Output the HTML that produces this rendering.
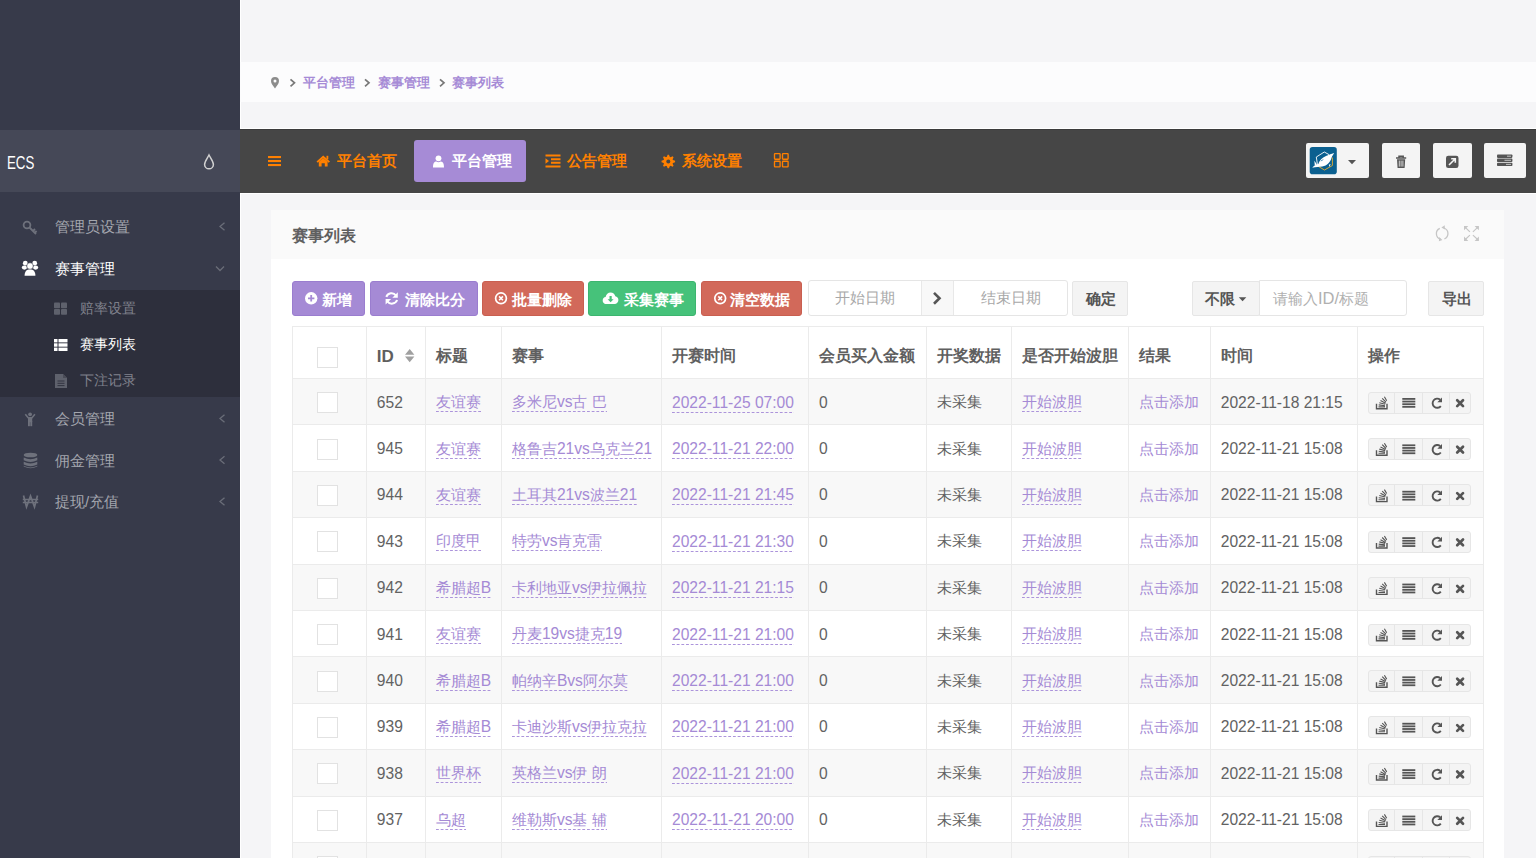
<!DOCTYPE html>
<html><head><meta charset="utf-8"><title>赛事列表</title>
<style>
*{box-sizing:border-box;margin:0;padding:0}
html,body{width:1536px;height:858px;overflow:hidden}
body{position:relative;background:#f5f5f7;font-family:"Liberation Sans",sans-serif;color:#555}
.abs{position:absolute}
svg{display:block;position:absolute}
/* sidebar */
#side{position:absolute;left:0;top:0;width:240px;height:858px;background:#373a4a}
#logo{position:absolute;left:0;top:130px;width:240px;height:62px;background:#454857}
#logo .t{position:absolute;left:7px;top:22px;font-size:17.5px;line-height:22px;color:#fff;transform:scaleX(0.76);transform-origin:0 0}
.mi{position:absolute;left:0;width:240px;height:42px;line-height:42px;font-size:15px;color:#a4a6ae}
.mi .tx{position:absolute;left:55px;top:0}
.mi.act{color:#fff}
#sub{position:absolute;left:0;top:290px;width:240px;height:107px;background:#2d2f3c}
.si{position:absolute;left:0;width:240px;height:36px;line-height:36px;font-size:14px;color:#80828d}
.si .tx{position:absolute;left:80px;top:0}
.si.act{color:#fff}
/* main top */
#bcbar{position:absolute;left:240px;top:62px;width:1296px;height:40px;background:#fcfcfd}
.bc{position:absolute;top:1px;line-height:40px;font-size:13px;font-weight:bold;color:#a68bd6}
#vline{position:absolute;left:240px;top:0;width:1px;height:858px;background:#fff}
#hl1{position:absolute;left:240px;top:128px;width:1296px;height:1px;background:#fff}
#nav{position:absolute;left:240px;top:129px;width:1296px;height:64px;background:#464646;border-top:1.5px solid #3b3b3b}
#hl2{position:absolute;left:240px;top:193px;width:1296px;height:1px;background:#fff}
.ni{position:absolute;top:0;line-height:62px;font-size:14.7px;font-weight:bold;color:#ff8000}
#nact{position:absolute;left:174px;top:10px;width:112px;height:42px;background:#a68bd6;border-radius:3px}
.tbtn{position:absolute;top:13px;height:35px;background:#f4f4f4;border-radius:2px}
/* panel */
#panel{position:absolute;left:271px;top:210px;width:1233px;height:700px;background:#fff}
#phead{position:absolute;left:0;top:0;width:1233px;height:49px;background:#fafafa}
#phead .t{position:absolute;left:21px;top:1px;line-height:50px;font-size:16px;font-weight:bold;color:#5f5f5f}
.btn{position:absolute;top:71px;height:35px;border-radius:3px;color:#fff;font-weight:bold;font-size:15px;line-height:35px}
.btn .tx{position:absolute;top:0}
.pur{background:#a58ad5;border:1px solid #9a7dcf}
.red{background:#d2695a;border:1px solid #c95f50}
.grn{background:#46c27a;border:1px solid #3db56f}
.inp{position:absolute;top:70px;height:36px;background:#fff;border:1px solid #e5e5e5;border-radius:3px;font-size:15px;color:#a9a9a9;line-height:34px}
.gbtn{position:absolute;top:71px;height:35px;background:#f4f4f4;border:1px solid #e6e6e6;border-radius:2px;font-size:15px;font-weight:bold;color:#555;line-height:33px}
/* table */
#tbl{position:absolute;left:20.5px;top:116px;border-collapse:collapse;table-layout:fixed;width:1192px}
#tbl td,#tbl th{border:1px solid #ebebeb;padding:0 0 0 10px;text-align:left;white-space:nowrap;overflow:hidden;font-size:15px;color:#626262;font-weight:normal}
#tbl th{height:52px;font-weight:bold;font-size:16px;color:#5f5f5f;padding-top:8px}
#tbl td{height:46.4px;padding-top:2px}
#tbl tr.odd td{background:#f8f8f8}
#tbl tr.even td{background:#fff}
#tbl a{color:#a58ad5;text-decoration:none;padding-bottom:2px;background:linear-gradient(90deg,#ac94db 50%,transparent 50%) 0 100%/4.7px 1px repeat-x}
#tbl a.plain{background:none}
.n{font-size:15.6px}
#tbl th .n{font-size:17px}
#tbl .c0{padding:0 3px 0 0;text-align:center}
#tbl th.c0 .cb{position:relative;top:4.5px}
#tbl td.c0{padding-top:2px}
.cb{display:inline-block;width:21px;height:21px;border:1px solid #e2e2e2;background:#fff;vertical-align:middle}
.ops{display:inline-block;width:103px;height:22px;border:1px solid #e6e6e6;border-radius:3px;background:#f4f4f4;vertical-align:middle;position:relative;margin-left:0}
.ops b{position:absolute;top:0;height:20px;border-left:1px solid #e6e6e6}
.ops .o1{display:none}.ops .o2{left:25.5px}.ops .o3{left:53px}.ops .o4{left:80.5px}

</style></head><body>
<div id="side">
  <div id="logo"><div class="t">ECS</div></div>
  <div class="mi" style="top:205.5px"><span class="tx">管理员设置</span></div>
  <div class="mi act" style="top:247.5px"><span class="tx">赛事管理</span></div>
  <div id="sub"></div>
  <div class="si" style="top:290px"><span class="tx">赔率设置</span></div>
  <div class="si act" style="top:326px"><span class="tx">赛事列表</span></div>
  <div class="si" style="top:362px"><span class="tx">下注记录</span></div>
  <div class="mi" style="top:397.5px"><span class="tx">会员管理</span></div>
  <div class="mi" style="top:439.5px"><span class="tx">佣金管理</span></div>
  <div class="mi" style="top:481px"><span class="tx">提现/充值</span></div>
</div>
<div id="vline"></div>
<div id="bcbar">
  <span class="bc" style="left:63px">平台管理</span>
  <span class="bc" style="left:138px">赛事管理</span>
  <span class="bc" style="left:212px">赛事列表</span>
</div>
<div id="hl1"></div>
<div id="nav">
  <span class="ni" style="left:97px">平台首页</span>
  <div id="nact"></div>
  <span class="ni" style="left:212px;color:#fff">平台管理</span>
  <span class="ni" style="left:327px">公告管理</span>
  <span class="ni" style="left:442px">系统设置</span>
  <div class="tbtn" style="left:1066px;width:63px"></div>
  <div class="tbtn" style="left:1142px;width:38px"></div>
  <div class="tbtn" style="left:1193px;width:39px"></div>
  <div class="tbtn" style="left:1244px;width:42px"></div>
</div>
<div id="hl2"></div>
<div id="panel">
  <div id="phead"><span class="t">赛事列表</span></div>
  <div class="btn pur" style="left:21px;width:73px"><span class="tx" style="left:29px">新增</span></div>
  <div class="btn pur" style="left:99px;width:108px"><span class="tx" style="left:34px">清除比分</span></div>
  <div class="btn red" style="left:211px;width:102px"><span class="tx" style="left:29px">批量删除</span></div>
  <div class="btn grn" style="left:317px;width:108px"><span class="tx" style="left:35px">采集赛事</span></div>
  <div class="btn red" style="left:430px;width:101px"><span class="tx" style="left:28px">清空数据</span></div>
  <div class="inp" style="left:537px;width:260px"></div>
  <div class="abs" style="left:650px;top:71px;width:33px;height:34px;background:#f8f8f8;border-left:1px solid #e8e8e8;border-right:1px solid #e8e8e8"></div>
  <span class="abs" style="left:564px;top:70px;line-height:36px;font-size:15px;color:#a8a8a8">开始日期</span>
  <span class="abs" style="left:710px;top:70px;line-height:36px;font-size:15px;color:#a8a8a8">结束日期</span>
  <div class="gbtn" style="left:801px;width:56px"><span class="abs" style="left:13px;top:0">确定</span></div>
  <div class="gbtn" style="left:921px;width:68px"><span class="abs" style="left:12px;top:0">不限</span></div>
  <div class="inp" style="left:988px;width:148px;border-radius:0 3px 3px 0"><span class="abs" style="left:13px;top:0;color:#b0b0b0">请输入<span style="font-size:16.5px">ID/</span>标题</span></div>
  <div class="gbtn" style="left:1157px;width:56px"><span class="abs" style="left:13px;top:0">导出</span></div>
  <table id="tbl">
    <colgroup><col style="width:74.3px"><col style="width:59px"><col style="width:76.1px"><col style="width:160.1px"><col style="width:146.9px"><col style="width:117.8px"><col style="width:85.2px"><col style="width:117.1px"><col style="width:81.8px"><col style="width:147.2px"><col style="width:126px"></colgroup>
    <tr><th class="c0"><i class="cb"></i></th><th><span class="n">ID</span></th><th>标题</th><th>赛事</th><th>开赛时间</th><th>会员买入金额</th><th>开奖数据</th><th>是否开始波胆</th><th>结果</th><th>时间</th><th>操作</th></tr>
<tr class="odd"><td class="c0"><i class="cb"></i></td><td class="c1"><span class="n">652</span></td><td class="c2"><a>友谊赛</a></td><td class="c3"><a>多米尼<span class="n">vs</span>古 巴</a></td><td class="c4"><a><span class="n">2022-11-25 07:00</span></a></td><td class="c5"><span class="n">0</span></td><td class="c6">未采集</td><td class="c7"><a>开始波胆</a></td><td class="c8"><a class="plain">点击添加</a></td><td class="c9"><span class="n">2022-11-18 21:15</span></td><td class="c10"><div class="ops"><b class="o1"></b><b class="o2"></b><b class="o3"></b><b class="o4"></b></div></td></tr>
<tr class="even"><td class="c0"><i class="cb"></i></td><td class="c1"><span class="n">945</span></td><td class="c2"><a>友谊赛</a></td><td class="c3"><a>格鲁吉<span class="n">21vs</span>乌克兰<span class="n">21</span></a></td><td class="c4"><a><span class="n">2022-11-21 22:00</span></a></td><td class="c5"><span class="n">0</span></td><td class="c6">未采集</td><td class="c7"><a>开始波胆</a></td><td class="c8"><a class="plain">点击添加</a></td><td class="c9"><span class="n">2022-11-21 15:08</span></td><td class="c10"><div class="ops"><b class="o1"></b><b class="o2"></b><b class="o3"></b><b class="o4"></b></div></td></tr>
<tr class="odd"><td class="c0"><i class="cb"></i></td><td class="c1"><span class="n">944</span></td><td class="c2"><a>友谊赛</a></td><td class="c3"><a>土耳其<span class="n">21vs</span>波兰<span class="n">21</span></a></td><td class="c4"><a><span class="n">2022-11-21 21:45</span></a></td><td class="c5"><span class="n">0</span></td><td class="c6">未采集</td><td class="c7"><a>开始波胆</a></td><td class="c8"><a class="plain">点击添加</a></td><td class="c9"><span class="n">2022-11-21 15:08</span></td><td class="c10"><div class="ops"><b class="o1"></b><b class="o2"></b><b class="o3"></b><b class="o4"></b></div></td></tr>
<tr class="even"><td class="c0"><i class="cb"></i></td><td class="c1"><span class="n">943</span></td><td class="c2"><a>印度甲</a></td><td class="c3"><a>特劳<span class="n">vs</span>肯克雷</a></td><td class="c4"><a><span class="n">2022-11-21 21:30</span></a></td><td class="c5"><span class="n">0</span></td><td class="c6">未采集</td><td class="c7"><a>开始波胆</a></td><td class="c8"><a class="plain">点击添加</a></td><td class="c9"><span class="n">2022-11-21 15:08</span></td><td class="c10"><div class="ops"><b class="o1"></b><b class="o2"></b><b class="o3"></b><b class="o4"></b></div></td></tr>
<tr class="odd"><td class="c0"><i class="cb"></i></td><td class="c1"><span class="n">942</span></td><td class="c2"><a>希腊超<span class="n">B</span></a></td><td class="c3"><a>卡利地亚<span class="n">vs</span>伊拉佩拉</a></td><td class="c4"><a><span class="n">2022-11-21 21:15</span></a></td><td class="c5"><span class="n">0</span></td><td class="c6">未采集</td><td class="c7"><a>开始波胆</a></td><td class="c8"><a class="plain">点击添加</a></td><td class="c9"><span class="n">2022-11-21 15:08</span></td><td class="c10"><div class="ops"><b class="o1"></b><b class="o2"></b><b class="o3"></b><b class="o4"></b></div></td></tr>
<tr class="even"><td class="c0"><i class="cb"></i></td><td class="c1"><span class="n">941</span></td><td class="c2"><a>友谊赛</a></td><td class="c3"><a>丹麦<span class="n">19vs</span>捷克<span class="n">19</span></a></td><td class="c4"><a><span class="n">2022-11-21 21:00</span></a></td><td class="c5"><span class="n">0</span></td><td class="c6">未采集</td><td class="c7"><a>开始波胆</a></td><td class="c8"><a class="plain">点击添加</a></td><td class="c9"><span class="n">2022-11-21 15:08</span></td><td class="c10"><div class="ops"><b class="o1"></b><b class="o2"></b><b class="o3"></b><b class="o4"></b></div></td></tr>
<tr class="odd"><td class="c0"><i class="cb"></i></td><td class="c1"><span class="n">940</span></td><td class="c2"><a>希腊超<span class="n">B</span></a></td><td class="c3"><a>帕纳辛<span class="n">Bvs</span>阿尔莫</a></td><td class="c4"><a><span class="n">2022-11-21 21:00</span></a></td><td class="c5"><span class="n">0</span></td><td class="c6">未采集</td><td class="c7"><a>开始波胆</a></td><td class="c8"><a class="plain">点击添加</a></td><td class="c9"><span class="n">2022-11-21 15:08</span></td><td class="c10"><div class="ops"><b class="o1"></b><b class="o2"></b><b class="o3"></b><b class="o4"></b></div></td></tr>
<tr class="even"><td class="c0"><i class="cb"></i></td><td class="c1"><span class="n">939</span></td><td class="c2"><a>希腊超<span class="n">B</span></a></td><td class="c3"><a>卡迪沙斯<span class="n">vs</span>伊拉克拉</a></td><td class="c4"><a><span class="n">2022-11-21 21:00</span></a></td><td class="c5"><span class="n">0</span></td><td class="c6">未采集</td><td class="c7"><a>开始波胆</a></td><td class="c8"><a class="plain">点击添加</a></td><td class="c9"><span class="n">2022-11-21 15:08</span></td><td class="c10"><div class="ops"><b class="o1"></b><b class="o2"></b><b class="o3"></b><b class="o4"></b></div></td></tr>
<tr class="odd"><td class="c0"><i class="cb"></i></td><td class="c1"><span class="n">938</span></td><td class="c2"><a>世界杯</a></td><td class="c3"><a>英格兰<span class="n">vs</span>伊 朗</a></td><td class="c4"><a><span class="n">2022-11-21 21:00</span></a></td><td class="c5"><span class="n">0</span></td><td class="c6">未采集</td><td class="c7"><a>开始波胆</a></td><td class="c8"><a class="plain">点击添加</a></td><td class="c9"><span class="n">2022-11-21 15:08</span></td><td class="c10"><div class="ops"><b class="o1"></b><b class="o2"></b><b class="o3"></b><b class="o4"></b></div></td></tr>
<tr class="even"><td class="c0"><i class="cb"></i></td><td class="c1"><span class="n">937</span></td><td class="c2"><a>乌超</a></td><td class="c3"><a>维勒斯<span class="n">vs</span>基 辅</a></td><td class="c4"><a><span class="n">2022-11-21 20:00</span></a></td><td class="c5"><span class="n">0</span></td><td class="c6">未采集</td><td class="c7"><a>开始波胆</a></td><td class="c8"><a class="plain">点击添加</a></td><td class="c9"><span class="n">2022-11-21 15:08</span></td><td class="c10"><div class="ops"><b class="o1"></b><b class="o2"></b><b class="o3"></b><b class="o4"></b></div></td></tr>
<tr class="odd"><td class="c0"><i class="cb"></i></td><td class="c1"><span class="n">936</span></td><td class="c2"><a>友谊赛</a></td><td class="c3"><a></a></td><td class="c4"><a></a></td><td class="c5"><span class="n">0</span></td><td class="c6">未采集</td><td class="c7"><a>开始波胆</a></td><td class="c8"><a class="plain">点击添加</a></td><td class="c9"></td><td class="c10"><div class="ops"><b class="o1"></b><b class="o2"></b><b class="o3"></b><b class="o4"></b></div></td></tr>
  </table>
</div>
<svg width="1536" height="858" viewBox="0 0 1536 858" style="left:0;top:0">
<path d="M275,88.5 C273.2,85.8 271,83.6 271,81 A4,4 0 0 1 279,81 C279,83.6 276.8,85.8 275,88.5Z" fill="#8c8c8c"/><circle cx="275" cy="81" r="1.5" fill="#fcfcfd"/>
<polyline points="290.5,79.3 294.5,82.8 290.5,86.3" fill="none" stroke="#787878" stroke-width="1.7"/>
<polyline points="365,79.3 369,82.8 365,86.3" fill="none" stroke="#787878" stroke-width="1.7"/>
<polyline points="440,79.3 444,82.8 440,86.3" fill="none" stroke="#787878" stroke-width="1.7"/>
<path d="M209,155 C207.2,158.5 204.6,161.5 204.6,164.4 A4.4,4.4 0 0 0 213.4,164.4 C213.4,161.5 210.8,158.5 209,155Z" fill="none" stroke="#d2d2d2" stroke-width="1.5"/>
<circle cx="27" cy="225" r="3.4" fill="none" stroke="#6e717c" stroke-width="1.8"/><path d="M29.5,227.5 L36,234 M33,231 L35,229 M34.8,232.8 L36.6,231" stroke="#6e717c" stroke-width="1.8" fill="none"/>
<circle cx="25.3" cy="263.2" r="2.4" fill="#fff"/><circle cx="34.7" cy="263.2" r="2.4" fill="#fff"/><ellipse cx="24.4" cy="267.6" rx="2.6" ry="2.1" fill="#fff"/><ellipse cx="35.6" cy="267.6" rx="2.6" ry="2.1" fill="#fff"/><circle cx="30" cy="266" r="3.3" fill="#fff" stroke="#373a4a" stroke-width="0.6"/><path d="M24.6,275.8 C24.6,271.3 26.4,269.4 30,269.4 C33.6,269.4 35.4,271.3 35.4,275.8 Z" fill="#fff"/>
<rect x="54" y="302.5" width="6" height="5.8" rx="0.8" fill="#5e616c"/>
<rect x="61" y="302.5" width="6" height="5.8" rx="0.8" fill="#5e616c"/>
<rect x="54" y="309" width="6" height="5.8" rx="0.8" fill="#5e616c"/>
<rect x="61" y="309" width="6" height="5.8" rx="0.8" fill="#5e616c"/>
<rect x="54" y="339" width="3.5" height="3.4" fill="#fff"/><rect x="58.5" y="339" width="9" height="3.4" fill="#fff"/>
<rect x="54" y="343.3" width="3.5" height="3.4" fill="#fff"/><rect x="58.5" y="343.3" width="9" height="3.4" fill="#fff"/>
<rect x="54" y="347.6" width="3.5" height="3.4" fill="#fff"/><rect x="58.5" y="347.6" width="9" height="3.4" fill="#fff"/>
<path d="M55,374 L63,374 L67,378 L67,388 L55,388Z" fill="#5e616c"/><path d="M63,374 L63,378 L67,378" fill="#4a4c57"/><path d="M57.5,381 H64.5 M57.5,383.3 H64.5 M57.5,385.6 H64.5" stroke="#2d2f3c" stroke-width="0.9"/>
<circle cx="30.1" cy="414.3" r="1.9" fill="#6e717c"/><polyline points="25.3,414.3 28.2,417.8 32,417.8 34.9,414.3" fill="none" stroke="#6e717c" stroke-width="1.6"/><rect x="28" y="417.2" width="4.2" height="5" fill="#6e717c"/><rect x="28" y="421" width="1.9" height="5.2" fill="#6e717c"/><rect x="30.3" y="421" width="1.9" height="5.2" fill="#6e717c"/>
<ellipse cx="30.5" cy="455" rx="6.8" ry="2.3" fill="#6e717c"/><path d="M23.7,457.5 Q30.5,461 37.3,457.5 V460.2 Q30.5,463.7 23.7,460.2Z" fill="#6e717c"/><path d="M23.7,461.7 Q30.5,465.2 37.3,461.7 V464.4 Q30.5,467.9 23.7,464.4Z" fill="#6e717c"/><path d="M23.7,465.8 Q30.5,469.3 37.3,465.8 V466.5 Q30.5,470 23.7,466.5Z" fill="#6e717c"/>
<path d="M23.5,495.5 L26.5,507 L30.5,496 L34.5,507 L37.5,495.5 M22.8,499.5 H38.2 M22.8,502.5 H38.2" fill="none" stroke="#6e717c" stroke-width="1.7"/>
<polyline points="224.5,222.7 220,226.5 224.5,230.3" fill="none" stroke="#6a6d78" stroke-width="1.3"/>
<polyline points="224.5,414.7 220,418.5 224.5,422.3" fill="none" stroke="#6a6d78" stroke-width="1.3"/>
<polyline points="224.5,456.2 220,460 224.5,463.8" fill="none" stroke="#6a6d78" stroke-width="1.3"/>
<polyline points="224.5,497.7 220,501.5 224.5,505.3" fill="none" stroke="#6a6d78" stroke-width="1.3"/>
<polyline points="216,266.5 220,270.5 224,266.5" fill="none" stroke="#6a6d78" stroke-width="1.3"/>
<rect x="268" y="156" width="13" height="2.1" fill="#ff8000"/>
<rect x="268" y="160" width="13" height="2.1" fill="#ff8000"/>
<rect x="268" y="164" width="13" height="2.1" fill="#ff8000"/>
<path d="M316.5,161.5 L323.2,155.5 L330,161.5 L328.7,162.8 L323.2,157.9 L317.8,162.8Z" fill="#ff8000"/><path d="M318.8,161.8 L323.2,158 L327.6,161.8 V166.5 H324.8 V163.3 H321.6 V166.5 H318.8Z" fill="#ff8000"/><rect x="326.5" y="155.8" width="1.8" height="3.5" fill="#ff8000"/>
<circle cx="438.5" cy="158.3" r="2.9" fill="#fff"/><path d="M433,167.5 C433,163 434.5,161.8 436.3,161.6 Q438.5,163 440.7,161.6 C442.5,161.8 444,163 444,167.5Z" fill="#fff"/>
<path d="M545.5,156 H560.5 V158 H545.5Z M551,159.7 H560.5 V161.7 H551Z M551,163.3 H560.5 V165.3 H551Z M545.5,167 H560.5 V169 H545.5Z" fill="#ff8000" transform="translate(0,-1.5)"/><path d="M545.5,158.3 L549,161 L545.5,163.7Z" fill="#ff8000"/>
<path d="M675.07,160.83 L675.07,162.17 L672.99,162.92 L672.62,163.81 L673.56,165.81 L672.61,166.76 L670.61,165.82 L669.72,166.19 L668.97,168.27 L667.63,168.27 L666.88,166.19 L665.99,165.82 L663.99,166.76 L663.04,165.81 L663.98,163.81 L663.61,162.92 L661.53,162.17 L661.53,160.83 L663.61,160.08 L663.98,159.19 L663.04,157.19 L663.99,156.24 L665.99,157.18 L666.88,156.81 L667.63,154.73 L668.97,154.73 L669.72,156.81 L670.61,157.18 L672.61,156.24 L673.56,157.19 L672.62,159.19 L672.99,160.08 Z" fill="#ff8000"/><circle cx="668.3" cy="161.5" r="2" fill="#464646"/>
<rect x="774.5" y="153.6" width="5.6" height="5.6" rx="0.6" fill="none" stroke="#ff8000" stroke-width="1.35"/>
<rect x="782.5" y="153.6" width="5.6" height="5.6" rx="0.6" fill="none" stroke="#ff8000" stroke-width="1.35"/>
<rect x="774.5" y="161.2" width="5.6" height="5.6" rx="0.6" fill="none" stroke="#ff8000" stroke-width="1.35"/>
<rect x="782.5" y="161.2" width="5.6" height="5.6" rx="0.6" fill="none" stroke="#ff8000" stroke-width="1.35"/>
<rect x="1309.7" y="147" width="27.1" height="27.2" rx="2.8" fill="#0b6090"/><path d="M1332.4,157.5 L1332.4,165.5 L1324.5,170 L1318,166.2" fill="none" stroke="#d4a83a" stroke-width="1"/><path d="M1317.6,165.5 L1316.3,157 L1324.3,152 L1329,154.6" fill="none" stroke="#fff" stroke-width="0.9"/><path d="M1312.3,167.8 C1314,165.6 1316,164.6 1318.3,164 C1319.5,160.5 1322,157.6 1326,156 C1329,154.8 1331.8,153.8 1334.2,153 C1333.2,154.7 1332,156.3 1331.4,158.3 C1330.3,162.3 1327.2,165.6 1322.3,166.6 C1319.3,167.2 1316,166.8 1312.3,167.8 Z" fill="#fff"/><path d="M1314.8,165.6 L1314.3,160.8 L1317,164.4 Z" fill="#fff"/><path d="M1320.6,161.4 C1321.4,159.8 1322.8,159 1323.8,159.6 C1322.8,160.3 1321.8,161.2 1320.6,161.4Z" fill="#0b6090"/><path d="M1328.8,164.8 L1329.6,167 L1330.6,164" fill="#fff"/>
<path d="M1348,160 H1356 L1352,164.2Z" fill="#555"/>
<path d="M1396,158 H1406.2 M1399,158 V156.3 H1403.2 V158" fill="none" stroke="#555" stroke-width="1.5"/><path d="M1397,159.2 H1405.2 L1404.6,168 H1397.6Z" fill="#555"/><path d="M1399.3,160.6 V166.6 M1401.1,160.6 V166.6 M1402.9,160.6 V166.6" stroke="#f4f4f4" stroke-width="0.8"/>
<rect x="1446" y="155.8" width="12.5" height="12.3" rx="2.3" fill="#555"/><path d="M1449,165 L1454.8,159.2 M1451.2,158.7 H1455.3 V162.8" fill="none" stroke="#f4f4f4" stroke-width="1.6"/>
<rect x="1497" y="154.5" width="15.4" height="3.4" rx="0.8" fill="#555"/>
<rect x="1497" y="158.6" width="15.4" height="3.4" rx="0.8" fill="#555"/>
<rect x="1497" y="162.7" width="15.4" height="3.4" rx="0.8" fill="#555"/>
<path d="M1507,156.2 H1511 M1504.5,160.3 H1511 M1506,164.4 H1511" stroke="#f4f4f4" stroke-width="0.7"/>
<path d="M1439.8,228.3 A5.9,5.9 0 0 0 1440.6,239.3" fill="none" stroke="#c6c6c6" stroke-width="1.3"/><path d="M1443.9,228.0 A5.9,5.9 0 0 1 1444.4,239.0" fill="none" stroke="#c6c6c6" stroke-width="1.3"/><path d="M1442.4,239.9 L1439.2,237.1 L1438.9,241.2Z" fill="#c6c6c6"/><path d="M1441.4,227.4 L1444.7,225.3 L1444.9,229.6Z" fill="#c6c6c6"/>
<path d="M1465,227.1 L1469.9,231.9 M1477.9,227.1 L1472.9,231.9 M1465,239.8 L1469.9,235.1 M1477.9,239.8 L1472.9,235.1" fill="none" stroke="#c6c6c6" stroke-width="1.2"/><path d="M1464,226 H1468.3 L1464,230.3Z M1478.9,226 H1474.6 L1478.9,230.3Z M1464,240.9 H1468.3 L1464,236.6Z M1478.9,240.9 H1474.6 L1478.9,236.6Z" fill="#c6c6c6"/>
<circle cx="311.2" cy="298.3" r="6.2" fill="#fff"/><path d="M308,298.3 H314.4 M311.2,295.1 V301.5" stroke="#a58ad5" stroke-width="1.8"/>
<path d="M396,295.5 A5.6,5.6 0 0 0 386.3,296.8 M387.4,301.4 A5.6,5.6 0 0 0 397.1,300" fill="none" stroke="#fff" stroke-width="2"/><path d="M397.8,292.2 V297.7 H392.3Z M385.6,304.6 V299.1 H391.1Z" fill="#fff"/>
<circle cx="501" cy="298.3" r="5.4" fill="none" stroke="#fff" stroke-width="1.7"/><path d="M499.1,296.4 L502.9,300.2 M502.9,296.4 L499.1,300.2" stroke="#fff" stroke-width="1.6"/>
<circle cx="720.2" cy="298.3" r="5.4" fill="none" stroke="#fff" stroke-width="1.7"/><path d="M718.3000000000001,296.4 L722.1,300.2 M722.1,296.4 L718.3000000000001,300.2" stroke="#fff" stroke-width="1.6"/>
<path d="M606.5,304 C603.5,304 602.7,302 602.7,300.5 C602.7,298.5 604,297.3 605.6,297.1 C606,294.3 608.2,292.5 610.5,292.5 C613,292.5 614.8,294.2 615.3,296.3 C617,296.5 618.4,298 618.4,300 C618.4,302.3 616.8,304 614.5,304Z" fill="#fff"/><path d="M609.5,296 H611.7 V299.2 H613.6 L610.6,302.3 L607.6,299.2 H609.5Z" fill="#46c27a"/>
<polyline points="934,292.9 939.5,298.3 934,303.7" fill="none" stroke="#555" stroke-width="2.6"/>
<path d="M1238.8,297.3 H1246.3 L1242.55,301.2Z" fill="#555"/>
<path d="M405,354.8 L409.7,349 L414.4,354.8Z M405,356.5 L409.7,362.3 L414.4,356.5Z" fill="#a0a0a0"/>
<path d="M1376.5,403.8 V408.8 H1387 V403.8" fill="none" stroke="#555" stroke-width="1.4"/><path d="M1378.5,406.90000000000003 H1385 M1378.7,404.90000000000003 L1385,405.7 M1379.3,402.7 L1385.2,404.2 M1380.5,400.5 L1385.6,403.2 M1382.2,398.3 L1386,402.1 M1384.4,396.8 L1386.7,400.7" stroke="#555" stroke-width="1.1"/>
<rect x="1402.3" y="398.00" width="13" height="1.8" fill="#555"/>
<rect x="1402.3" y="400.65" width="13" height="1.8" fill="#555"/>
<rect x="1402.3" y="403.30" width="13" height="1.8" fill="#555"/>
<rect x="1402.3" y="405.95" width="13" height="1.8" fill="#555"/>
<path d="M1440.2,399.7 A4.6,4.6 0 1 0 1440.8,406.1" fill="none" stroke="#555" stroke-width="1.9"/><path d="M1442,397.6 V402.3 H1437.3Z" fill="#555"/>
<path d="M1457.2,400.3 L1463,406.1 M1463,400.3 L1457.2,406.1" stroke="#555" stroke-width="2.7" stroke-linecap="round"/>
<path d="M1376.5,450.2 V455.2 H1387 V450.2" fill="none" stroke="#555" stroke-width="1.4"/><path d="M1378.5,453.3 H1385 M1378.7,451.3 L1385,452.09999999999997 M1379.3,449.09999999999997 L1385.2,450.59999999999997 M1380.5,446.9 L1385.6,449.59999999999997 M1382.2,444.7 L1386,448.5 M1384.4,443.2 L1386.7,447.09999999999997" stroke="#555" stroke-width="1.1"/>
<rect x="1402.3" y="444.40" width="13" height="1.8" fill="#555"/>
<rect x="1402.3" y="447.05" width="13" height="1.8" fill="#555"/>
<rect x="1402.3" y="449.70" width="13" height="1.8" fill="#555"/>
<rect x="1402.3" y="452.35" width="13" height="1.8" fill="#555"/>
<path d="M1440.2,446.09999999999997 A4.6,4.6 0 1 0 1440.8,452.5" fill="none" stroke="#555" stroke-width="1.9"/><path d="M1442,444.0 V448.7 H1437.3Z" fill="#555"/>
<path d="M1457.2,446.7 L1463,452.5 M1463,446.7 L1457.2,452.5" stroke="#555" stroke-width="2.7" stroke-linecap="round"/>
<path d="M1376.5,496.6 V501.6 H1387 V496.6" fill="none" stroke="#555" stroke-width="1.4"/><path d="M1378.5,499.70000000000005 H1385 M1378.7,497.70000000000005 L1385,498.5 M1379.3,495.5 L1385.2,497.0 M1380.5,493.3 L1385.6,496.0 M1382.2,491.1 L1386,494.90000000000003 M1384.4,489.6 L1386.7,493.5" stroke="#555" stroke-width="1.1"/>
<rect x="1402.3" y="490.80" width="13" height="1.8" fill="#555"/>
<rect x="1402.3" y="493.45" width="13" height="1.8" fill="#555"/>
<rect x="1402.3" y="496.10" width="13" height="1.8" fill="#555"/>
<rect x="1402.3" y="498.75" width="13" height="1.8" fill="#555"/>
<path d="M1440.2,492.5 A4.6,4.6 0 1 0 1440.8,498.90000000000003" fill="none" stroke="#555" stroke-width="1.9"/><path d="M1442,490.40000000000003 V495.1 H1437.3Z" fill="#555"/>
<path d="M1457.2,493.1 L1463,498.90000000000003 M1463,493.1 L1457.2,498.90000000000003" stroke="#555" stroke-width="2.7" stroke-linecap="round"/>
<path d="M1376.5,543.0 V548.0 H1387 V543.0" fill="none" stroke="#555" stroke-width="1.4"/><path d="M1378.5,546.1 H1385 M1378.7,544.1 L1385,544.9 M1379.3,541.9 L1385.2,543.4 M1380.5,539.7 L1385.6,542.4 M1382.2,537.5 L1386,541.3 M1384.4,536.0 L1386.7,539.9" stroke="#555" stroke-width="1.1"/>
<rect x="1402.3" y="537.20" width="13" height="1.8" fill="#555"/>
<rect x="1402.3" y="539.85" width="13" height="1.8" fill="#555"/>
<rect x="1402.3" y="542.50" width="13" height="1.8" fill="#555"/>
<rect x="1402.3" y="545.15" width="13" height="1.8" fill="#555"/>
<path d="M1440.2,538.9 A4.6,4.6 0 1 0 1440.8,545.3" fill="none" stroke="#555" stroke-width="1.9"/><path d="M1442,536.8 V541.5 H1437.3Z" fill="#555"/>
<path d="M1457.2,539.5 L1463,545.3 M1463,539.5 L1457.2,545.3" stroke="#555" stroke-width="2.7" stroke-linecap="round"/>
<path d="M1376.5,589.4 V594.4 H1387 V589.4" fill="none" stroke="#555" stroke-width="1.4"/><path d="M1378.5,592.5 H1385 M1378.7,590.5 L1385,591.3 M1379.3,588.3 L1385.2,589.8 M1380.5,586.1 L1385.6,588.8 M1382.2,583.9 L1386,587.6999999999999 M1384.4,582.4 L1386.7,586.3" stroke="#555" stroke-width="1.1"/>
<rect x="1402.3" y="583.60" width="13" height="1.8" fill="#555"/>
<rect x="1402.3" y="586.25" width="13" height="1.8" fill="#555"/>
<rect x="1402.3" y="588.90" width="13" height="1.8" fill="#555"/>
<rect x="1402.3" y="591.55" width="13" height="1.8" fill="#555"/>
<path d="M1440.2,585.3 A4.6,4.6 0 1 0 1440.8,591.6999999999999" fill="none" stroke="#555" stroke-width="1.9"/><path d="M1442,583.1999999999999 V587.9 H1437.3Z" fill="#555"/>
<path d="M1457.2,585.9 L1463,591.6999999999999 M1463,585.9 L1457.2,591.6999999999999" stroke="#555" stroke-width="2.7" stroke-linecap="round"/>
<path d="M1376.5,635.8 V640.8 H1387 V635.8" fill="none" stroke="#555" stroke-width="1.4"/><path d="M1378.5,638.9 H1385 M1378.7,636.9 L1385,637.6999999999999 M1379.3,634.6999999999999 L1385.2,636.1999999999999 M1380.5,632.5 L1385.6,635.1999999999999 M1382.2,630.3 L1386,634.0999999999999 M1384.4,628.8 L1386.7,632.6999999999999" stroke="#555" stroke-width="1.1"/>
<rect x="1402.3" y="630.00" width="13" height="1.8" fill="#555"/>
<rect x="1402.3" y="632.65" width="13" height="1.8" fill="#555"/>
<rect x="1402.3" y="635.30" width="13" height="1.8" fill="#555"/>
<rect x="1402.3" y="637.95" width="13" height="1.8" fill="#555"/>
<path d="M1440.2,631.6999999999999 A4.6,4.6 0 1 0 1440.8,638.0999999999999" fill="none" stroke="#555" stroke-width="1.9"/><path d="M1442,629.5999999999999 V634.3 H1437.3Z" fill="#555"/>
<path d="M1457.2,632.3 L1463,638.0999999999999 M1463,632.3 L1457.2,638.0999999999999" stroke="#555" stroke-width="2.7" stroke-linecap="round"/>
<path d="M1376.5,682.2 V687.2 H1387 V682.2" fill="none" stroke="#555" stroke-width="1.4"/><path d="M1378.5,685.3000000000001 H1385 M1378.7,683.3000000000001 L1385,684.1 M1379.3,681.1 L1385.2,682.6 M1380.5,678.9000000000001 L1385.6,681.6 M1382.2,676.7 L1386,680.5 M1384.4,675.2 L1386.7,679.1" stroke="#555" stroke-width="1.1"/>
<rect x="1402.3" y="676.40" width="13" height="1.8" fill="#555"/>
<rect x="1402.3" y="679.05" width="13" height="1.8" fill="#555"/>
<rect x="1402.3" y="681.70" width="13" height="1.8" fill="#555"/>
<rect x="1402.3" y="684.35" width="13" height="1.8" fill="#555"/>
<path d="M1440.2,678.1 A4.6,4.6 0 1 0 1440.8,684.5" fill="none" stroke="#555" stroke-width="1.9"/><path d="M1442,676.0 V680.7 H1437.3Z" fill="#555"/>
<path d="M1457.2,678.7 L1463,684.5 M1463,678.7 L1457.2,684.5" stroke="#555" stroke-width="2.7" stroke-linecap="round"/>
<path d="M1376.5,728.6 V733.6 H1387 V728.6" fill="none" stroke="#555" stroke-width="1.4"/><path d="M1378.5,731.7 H1385 M1378.7,729.7 L1385,730.5 M1379.3,727.5 L1385.2,729.0 M1380.5,725.3000000000001 L1385.6,728.0 M1382.2,723.1 L1386,726.9 M1384.4,721.6 L1386.7,725.5" stroke="#555" stroke-width="1.1"/>
<rect x="1402.3" y="722.80" width="13" height="1.8" fill="#555"/>
<rect x="1402.3" y="725.45" width="13" height="1.8" fill="#555"/>
<rect x="1402.3" y="728.10" width="13" height="1.8" fill="#555"/>
<rect x="1402.3" y="730.75" width="13" height="1.8" fill="#555"/>
<path d="M1440.2,724.5 A4.6,4.6 0 1 0 1440.8,730.9" fill="none" stroke="#555" stroke-width="1.9"/><path d="M1442,722.4 V727.1 H1437.3Z" fill="#555"/>
<path d="M1457.2,725.1 L1463,730.9 M1463,725.1 L1457.2,730.9" stroke="#555" stroke-width="2.7" stroke-linecap="round"/>
<path d="M1376.5,775.0 V780.0 H1387 V775.0" fill="none" stroke="#555" stroke-width="1.4"/><path d="M1378.5,778.1 H1385 M1378.7,776.1 L1385,776.9 M1379.3,773.9 L1385.2,775.4 M1380.5,771.7 L1385.6,774.4 M1382.2,769.5 L1386,773.3 M1384.4,768.0 L1386.7,771.9" stroke="#555" stroke-width="1.1"/>
<rect x="1402.3" y="769.20" width="13" height="1.8" fill="#555"/>
<rect x="1402.3" y="771.85" width="13" height="1.8" fill="#555"/>
<rect x="1402.3" y="774.50" width="13" height="1.8" fill="#555"/>
<rect x="1402.3" y="777.15" width="13" height="1.8" fill="#555"/>
<path d="M1440.2,770.9 A4.6,4.6 0 1 0 1440.8,777.3" fill="none" stroke="#555" stroke-width="1.9"/><path d="M1442,768.8 V773.5 H1437.3Z" fill="#555"/>
<path d="M1457.2,771.5 L1463,777.3 M1463,771.5 L1457.2,777.3" stroke="#555" stroke-width="2.7" stroke-linecap="round"/>
<path d="M1376.5,821.4 V826.4 H1387 V821.4" fill="none" stroke="#555" stroke-width="1.4"/><path d="M1378.5,824.5 H1385 M1378.7,822.5 L1385,823.3 M1379.3,820.3 L1385.2,821.8 M1380.5,818.1 L1385.6,820.8 M1382.2,815.9 L1386,819.6999999999999 M1384.4,814.4 L1386.7,818.3" stroke="#555" stroke-width="1.1"/>
<rect x="1402.3" y="815.60" width="13" height="1.8" fill="#555"/>
<rect x="1402.3" y="818.25" width="13" height="1.8" fill="#555"/>
<rect x="1402.3" y="820.90" width="13" height="1.8" fill="#555"/>
<rect x="1402.3" y="823.55" width="13" height="1.8" fill="#555"/>
<path d="M1440.2,817.3 A4.6,4.6 0 1 0 1440.8,823.6999999999999" fill="none" stroke="#555" stroke-width="1.9"/><path d="M1442,815.1999999999999 V819.9 H1437.3Z" fill="#555"/>
<path d="M1457.2,817.9 L1463,823.6999999999999 M1463,817.9 L1457.2,823.6999999999999" stroke="#555" stroke-width="2.7" stroke-linecap="round"/>
<path d="M1376.5,867.8 V872.8 H1387 V867.8" fill="none" stroke="#555" stroke-width="1.4"/><path d="M1378.5,870.9 H1385 M1378.7,868.9 L1385,869.6999999999999 M1379.3,866.6999999999999 L1385.2,868.1999999999999 M1380.5,864.5 L1385.6,867.1999999999999 M1382.2,862.3 L1386,866.0999999999999 M1384.4,860.8 L1386.7,864.6999999999999" stroke="#555" stroke-width="1.1"/>
<rect x="1402.3" y="862.00" width="13" height="1.8" fill="#555"/>
<rect x="1402.3" y="864.65" width="13" height="1.8" fill="#555"/>
<rect x="1402.3" y="867.30" width="13" height="1.8" fill="#555"/>
<rect x="1402.3" y="869.95" width="13" height="1.8" fill="#555"/>
<path d="M1440.2,863.6999999999999 A4.6,4.6 0 1 0 1440.8,870.0999999999999" fill="none" stroke="#555" stroke-width="1.9"/><path d="M1442,861.5999999999999 V866.3 H1437.3Z" fill="#555"/>
<path d="M1457.2,864.3 L1463,870.0999999999999 M1463,864.3 L1457.2,870.0999999999999" stroke="#555" stroke-width="2.7" stroke-linecap="round"/>
</svg>

</body></html>
